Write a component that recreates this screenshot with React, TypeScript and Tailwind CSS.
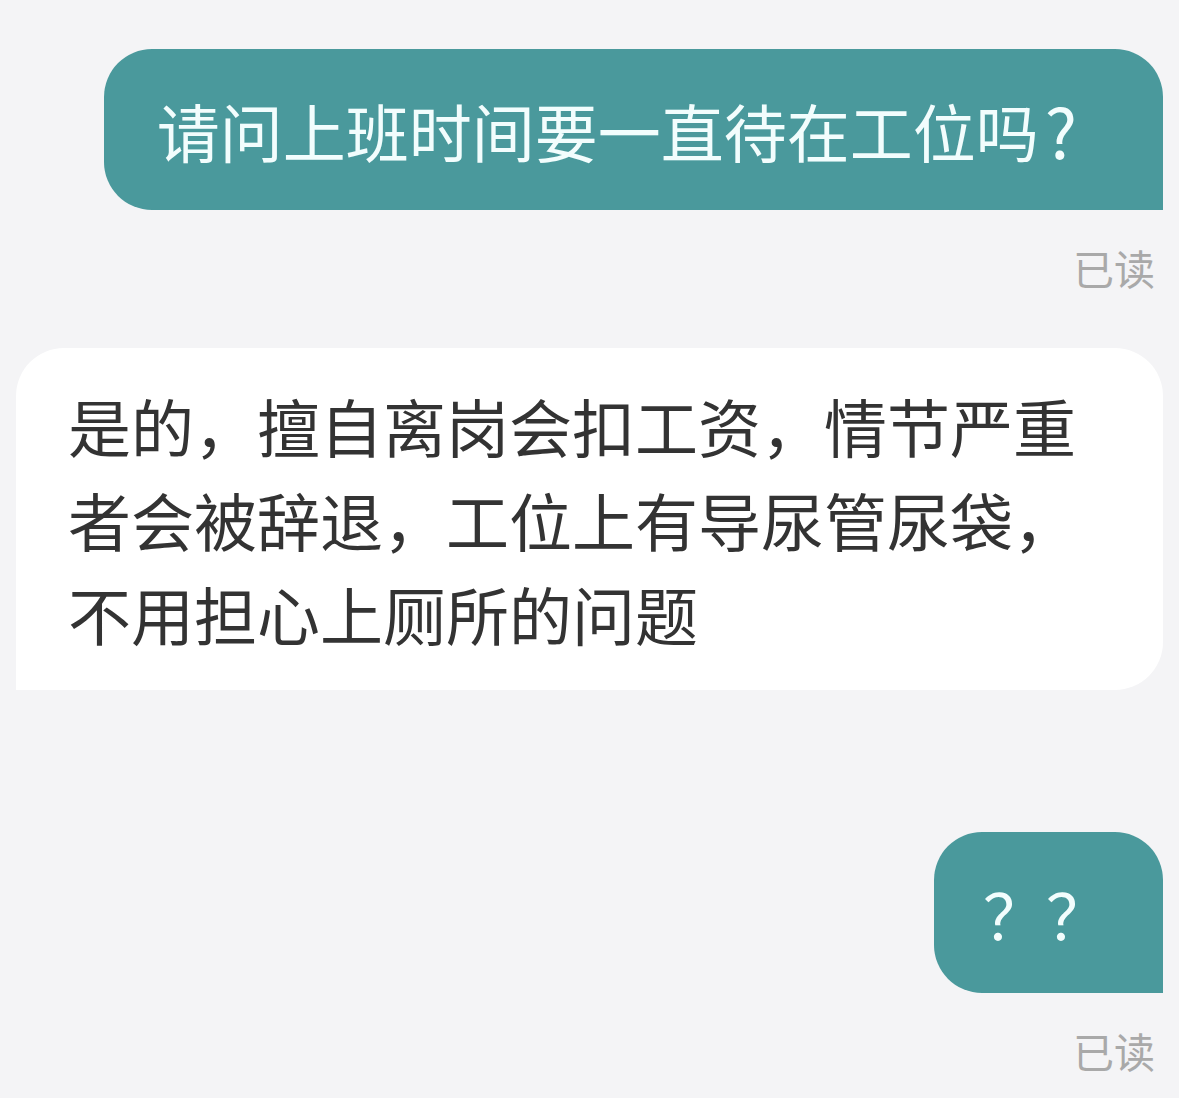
import React from "react";

const font = { fontFamily: '"Noto Sans CJK SC", "Noto Sans", sans-serif' };

export default function App() {
  return (
    <div className="min-h-[1098px] w-full bg-[#f4f4f6] flex flex-col pt-[49px]" style={font}>
      <div className="flex justify-end pr-4">
        <div className="h-[161px] flex items-center bg-[#4a999c] text-[#f2fdfd] text-[63px] leading-none rounded-[48px] rounded-br-none pl-[53px] pr-[86px] whitespace-nowrap">
          请问上班时间要一直待在工位吗<span className="ml-[6px] text-[68px]">?</span>
        </div>
      </div>
      <div className="flex justify-end pr-[24px] mt-[37px]">
        <span className="text-[41px] leading-[40px] text-[#a9a9a9]">已读</span>
      </div>
      <div className="mx-4 mt-[61px] bg-white rounded-[48px] rounded-bl-none pl-[52px] pr-4 py-[30px] text-[63px] leading-[94px] text-[#333333] whitespace-nowrap">
        是的，擅自离岗会扣工资，情节严重
        <br />
        者会被辞退，工位上有导尿管尿袋，
        <br />
        不用担心上厕所的问题
      </div>
      <div className="flex justify-end pr-4 mt-[142px]">
        <div className="h-[161px] w-[229px] flex items-center bg-[#4a999c] text-[#f2fdfd] text-[63px] leading-none rounded-[48px] rounded-br-none pl-[49px] whitespace-nowrap">
          ？？
        </div>
      </div>
      <div className="flex justify-end pr-[24px] mt-[37px]">
        <span className="text-[41px] leading-[40px] text-[#a9a9a9]">已读</span>
      </div>
    </div>
  );
}
